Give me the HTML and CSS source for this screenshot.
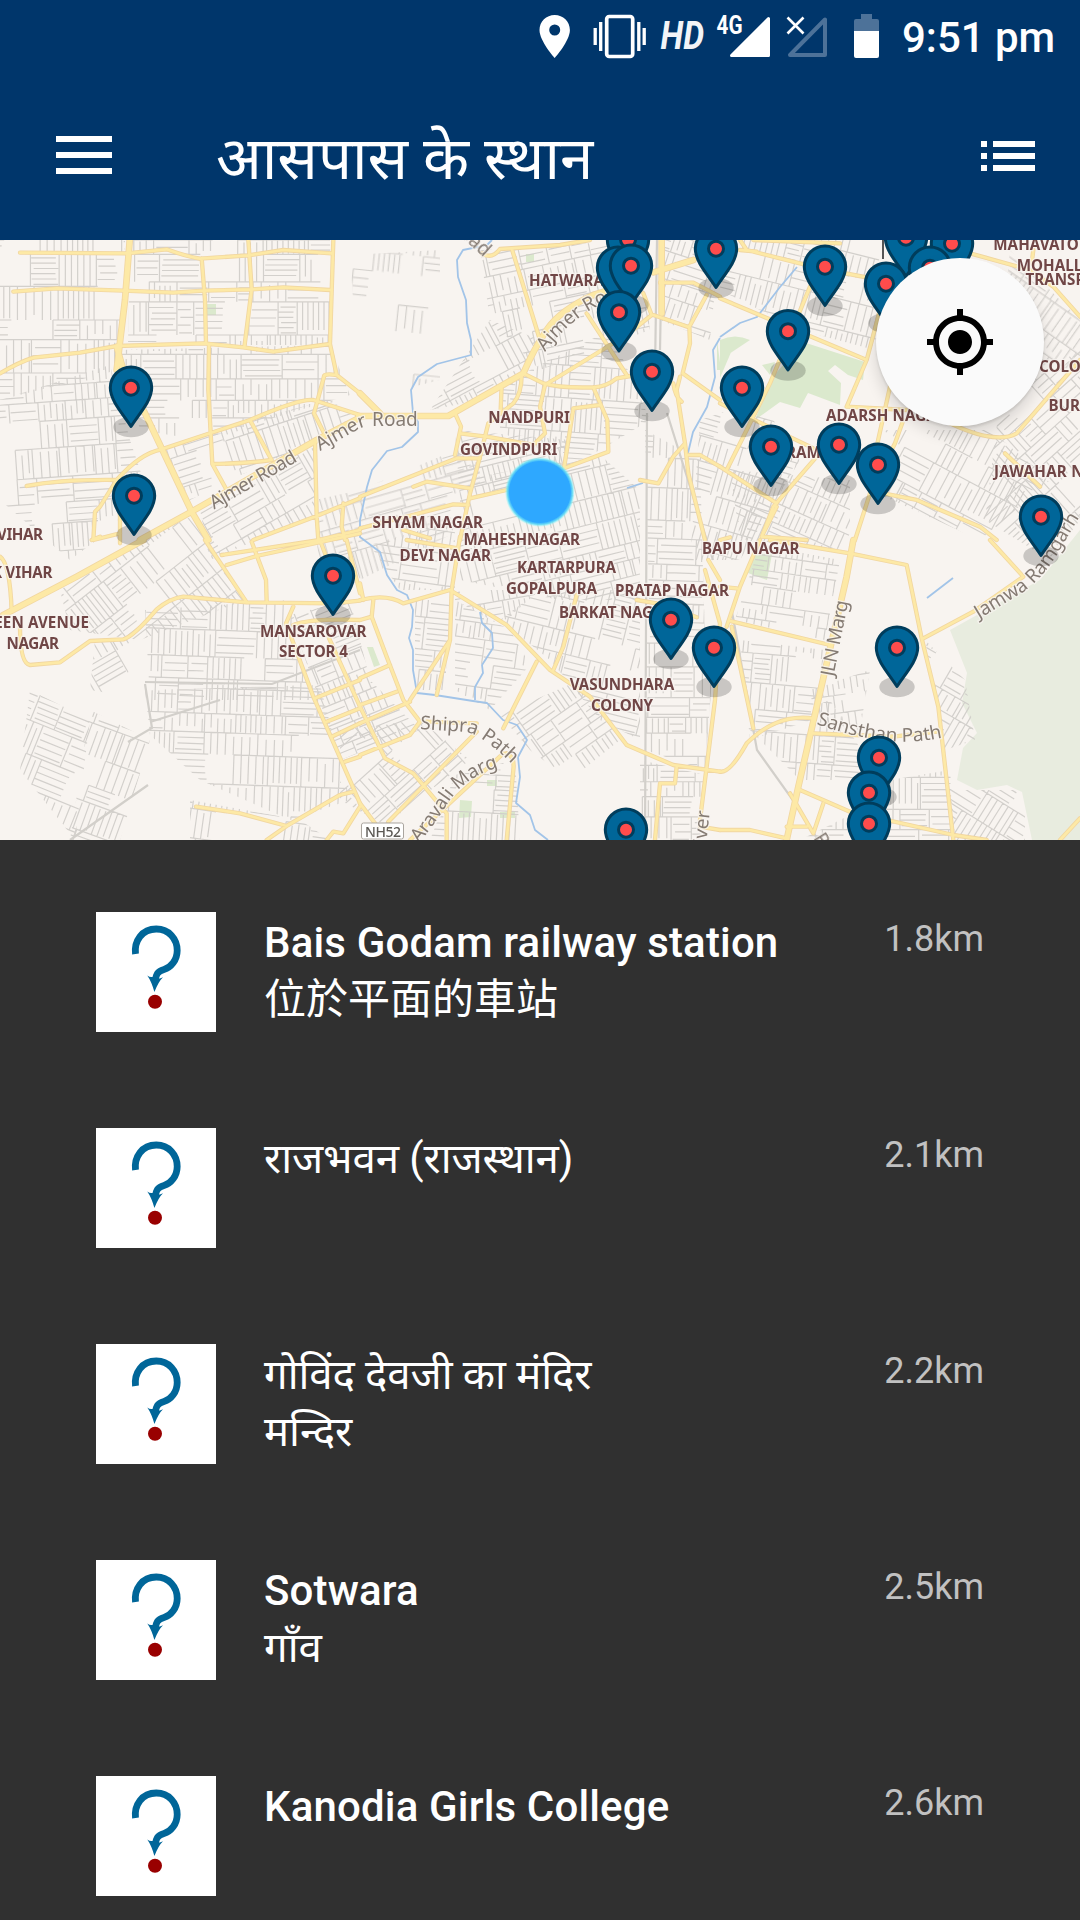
FILE: index.html
```html
<!DOCTYPE html>
<html lang="hi">
<head>
<meta charset="utf-8">
<title>आसपास के स्थान</title>
<link rel="stylesheet" href="styles.css">
</head>
<body>
<header class="top">
  <div class="status">
    <svg class="status-icons" viewBox="530 0 360 72" width="360" height="72">
      <path fill="#fff" fill-rule="evenodd" d="M554.7 15c-8.400 0-15.200 6.500-15.200 15 0 11 15.200 28 15.200 28s15.200-17 15.200-28c0-8.500-6.800-15-15.200-15zm0 9.500a5.500 5.500 0 1 1 0 11 5.500 5.500 0 0 1 0-11z"/>
      <rect x="606.700" y="16.500" width="26" height="40" rx="2.500" fill="none" stroke="#fff" stroke-width="3.700"/>
      <path stroke="#fff" stroke-width="3.300" d="M600.700 22v29M595.200 28v17M638.800 22v29M644.200 28v17"/>
      <text x="660.500" y="48.500" class="st-hd" textLength="43.500" lengthAdjust="spacingAndGlyphs">HD</text>
      <text x="716.500" y="34" class="st-4g" textLength="26" lengthAdjust="spacingAndGlyphs">4G</text>
      <path fill="#fff" stroke="#fff" stroke-width="3" stroke-linejoin="round" d="M768.500 18.500v37H731.500z"/>
      <path fill="none" stroke="#4d7299" stroke-width="4" stroke-linejoin="round" d="M825 19.500V55H790z"/>
      <path stroke="#fff" stroke-width="2.600" d="M787.500 17.500l16 16M803.500 17.500l-16 16"/>
      <path fill="#4d7299" d="M861 14h11v5h5q2 0 2 2v10h-25V21q0-2 2-2h5z"/>
      <path fill="#fff" d="M854 31h25v25q0 2-2 2h-21q-2 0-2-2z"/>
    </svg>
    <span class="clock">9:51 pm</span>
  </div>
  <div class="appbar">
    <svg class="menu" width="56" height="38" viewBox="0 0 56 38"><path fill="#fff" d="M0 0h56v6H0zM0 16h56v6H0zM0 32h56v6H0z"/></svg>
    <h1 class="heading">आसपास के स्थान</h1>
    <svg class="list-toggle" width="54" height="30" viewBox="0 0 54 30"><path fill="#fff" d="M0 0h6v6H0zM12 0h42v6H12zM0 12h6v6H0zM12 12h42v6H12zM0 24h6v6H0zM12 24h42v6H12z"/></svg>
  </div>
</header>

<section class="map">
<svg class="map-canvas" width="1080" height="600" viewBox="0 240 1080 600">
  <defs>
    <g id="pin">
      <path fill="#006699" stroke="#003d5c" stroke-width="3" stroke-linejoin="round" d="M0-1.500C-5-9-12-18-16-25-19-30.500-20.700-35-20.700-40.200a20.700 20.700 0 0 1 41.400 0C20.700-35 19-30.500 16-25 12-18 5-9 0-1.500z"/>
      <circle cy="-40.300" r="7.500" fill="#ff4c4c" stroke="#003d5c" stroke-width="3"/>
    </g>
    <radialGradient id="me"><stop offset=".87" stop-color="#2ea8ff"/><stop offset=".93" stop-color="#5cd8f5" stop-opacity=".9"/><stop offset="1" stop-color="#8ff" stop-opacity="0"/></radialGradient>
    <path id="aj2" d="M320 451L352 433Q361 427 368 426L412 426"/>
    <path id="aj3" d="M545 352Q560 332 580 317T628 295"/>
    <path id="ship" d="M420 729L466 732Q482 735 510 762"/>
    <path id="arav" d="M419 843Q432 828 448 803T496 768"/>
    <path id="sans" d="M816 724Q850 736 880 740T940 738"/>
    <path id="jam" d="M979 619L1025 591Q1045 575 1058 553T1085 508"/>
    <g id="roads">
      <g transform="translate(0 240) scale(.33333)">
        <path d="M60 38L380 40 500 28Q560 50 600 56L745 46 850 30 995 40M40 155L170 145 370 152 520 158 612 152 755 148 850 142 990 150M0 400Q60 365 100 353L240 338 350 318 610 310 730 322 820 335 990 312M605 55L615 180 618 310M627 312L625 450 637 672 680 750M745 0L755 148 733 322M1000 0L990 312 1010 405 1080 460M1010 405Q970 400 972 410L942 520 975 585M350 720Q420 640 485 628L750 540Q900 475 940 480L1080 525M750 540L815 660Q750 670 637 672M80 738Q180 718 350 720L300 800 285 815 280 900 360 880 360 800M945 605L950 830 955 900M760 900L950 828 1080 775M1030 790L1025 860 1035 900M1080 870L955 900"/>
        <path class="major" d="M390-10L375 180 350 390M350 320L370 390 435 520 575 815 625 900M420 900L575 815 950 600 1085 530"/>
      </g>
      <g transform="translate(360 240) scale(.33333)">
        <path d="M365 40Q395 60 420 27L600 15 690 0M455 25L500 170 540 300M555 435L800 285 875 225 850 160M680 220L800 405M490 400L550 430Q600 445 700 442 740 440 770 415L830 405M900 128L1000 128 1080 170M1040 165L988 260 990 310 968 400 1080 480M880 225L988 262M425 435L422 510M485 405Q485 460 460 490L385 550 360 650 330 760 300 900M555 435L540 500 555 580 525 610M285 520L303 560 285 645M300 580L380 590 520 615M720 495L640 505 612 685M700 442L742 540 745 635 612 685 440 750 330 775M0 770L290 655 360 655M160 740L200 725 330 745M325 795L280 793 100 840 0 865M130 870L210 895M960 410L950 450 975 610 985 700 1035 900M840 720L895 730 940 650 975 610M985 645L1020 645 1080 680M940 430Q945 470 965 485"/>
        <path class="major" d="M-5 528L265 528 490 400Q520 330 560 270T700 165L780 140M905 0L905 220M880 97L1000 60M0 460L60 520"/>
      </g>
      <g transform="translate(720 240) scale(.33333)">
        <path d="M0 175L440 360M80 30L240 70 350 95 480 120M80 30L60 0M270 140L150 430 20 690M0 490L270 620 350 665M0 680L170 790M490 760L590 780 780 860 830 900M290 650L160 800 125 890 260 900M60 30L110 35M360 10L100 0M480 210L440 360 380 500 560 510M510 440L470 620M550 540L525 610 450 760 405 900M650 530Q820 620 890 580L1080 360M750 40L930 90 1000 140 1080 230M855 640L960 740M940 30L935 70M0 900L30 892M130 880L170 800"/>
      </g>
      <g transform="translate(0 540) scale(.33333)">
        <path d="M0 50Q30 70 35 215M60 260Q60 370 90 375L180 367 270 303 370 298Q400 290 470 208 510 175 550 170L740 187 1000 190 1080 182M615 0L740 187M665 45L960 0M680 75L770 48 1080-20M755 5L798 120 800 185M960 0L990 80M1040 0L1080 160M880 200L858 250 940 470 1080 790M880 255Q930 235 1080 240M945 475L1080 420M980 545L1080 505M995 590L1080 550M1035 665L1080 650M588 800L720 820 860 858 1020 765 1060 755M860 858L800 900M1080 800L1030 880 1000 875 980 900M985 290L1080 500M275 0L300-10M360 10L360-20"/>
        <path class="major" d="M10 225L230 110 430 0"/>
      </g>
      <g transform="translate(360 540) scale(.33333)">
        <path d="M0 180Q80 160 130 190L270 150 440 255 570 390 690 470 800 615 940 675 1080 695M140 0L295 25M300-10L275 150 270 300 230 465M270 300L150 480M0 130L10 180M40 180L35 230 80 350 130 480 180 545 150 585 0 645M0 240L35 230M0 415L90 375M0 495L110 455M0 550L150 485M0 500L75 655 160 700 260 820 260 900M0 790L45 850M85 845L350 575M430 565L530 365M350 550L200 545M440 640Q465 650 460 690L440 900M150 900L430 640M650 165L610 320 580 390M1045 60L1080 120M1035 90L1080 250 1065 480 1020 840M1020 860L1080 870M950 680L945 730 900 730 885 900M830 180L890 190M980 220L1010 232"/>
      </g>
      <g transform="translate(720 540) scale(.33333)">
        <path d="M150 0L390 40 560 75 605 295 655 500 700 900M120 0L60 140 20 260M30 243L330 315M610 295L760 215 910 110 810 0M0 140L50 145M35 260L100 565M0 695Q30 700 80 610 170 520 280 535M280 580L520 590 650 575M240 750L390 815 700 885 800 900M310 790L280 880 210 760M200 860L260 860M0 870L90 870 200 895M1020 900L1080 835"/>
        <path class="major" d="M400 0L380 110 235 740 200 900"/>
      </g>
    </g>
  </defs>
  <rect y="240" width="1080" height="600" fill="#f8f4f0"/>
  <path fill="#e8ecdf" d="M1080 530L1040 580 950 630 967 673 962 703 977 733 963 748 957 780 977 790 1007 785 1022 792 1032 840H1080z"/>
  <g fill="#dbe9cd">
    <path d="M803 342L865 362 863 380 848 375 835 365 828 371 841 383 840 405 808 393 800 408 780 402 755 420 770 380zM720 340Q735 333 750 340L720 360zM720 345L732 350 720 378zM762 365L775 362 770 375zM753 554L772 554 767 580 748 573zM207 304h9v11h-9zM526 254h8v8h-8zM367 647l6 0 7 18-6 2zM460 800l12 1-1 16-12 1zM487 780h10v6h-10zM500 812h15v6h-15zM717 340l4 30-4 0z"/>
  </g>
  <g id="streets" class="streets"></g>
  <g class="rail"><path d="M657 240L655 370M647 413L645 840M667 413L713 560M662 240L660 350M737 640L757 750 800 810 818 840M732 612L740 655M145 682L272 684 360 650M150 722L220 700M70 840L148 785M145 684L152 728 128 742"/></g>
  <g class="water">
    <path d="M492 240L487 245 463 250 457 260 458 277 466 300 467 323 471 340 471 355 437 364 418 377 411 390 413 413 418 422 418 432 402 447 387 451 372 470 367 487 360 520 360 537 380 552 387 575 397 590 407 595 413 610 412 627 409 638 413 650 413 670 417 693 435 695 473 701 487 703 503 720 517 725 527 740 518 757 520 777 516 803 530 815 535 830 548 840M480 612L482 623 492 633 493 648 482 665 483 673 475 687 475 700M720 338L713 350 715 377 707 407 693 432 688 453M627 488L643 483M797 267L780 287 757 317 740 323 720 337M927 598L953 578"/>
  </g>
  <use href="#roads" class="casing"/>
  <use href="#roads" class="fill"/>
  <g class="rail dark"><path d="M883 240V259"/></g>

  <g class="place">
    <text x="529" y="286" textLength="75">HATWARA</text>
    <text x="488.300" y="422.500" textLength="81.500">NANDPURI</text>
    <text x="460" y="455.300" textLength="97.500">GOVINDPURI</text>
    <text x="372.500" y="528" textLength="110.500">SHYAM NAGAR</text>
    <text x="463.500" y="545" textLength="116.500">MAHESHNAGAR</text>
    <text x="399.500" y="561" textLength="91.500">DEVI NAGAR</text>
    <text x="517" y="573" textLength="99">KARTARPURA</text>
    <text x="506" y="594" textLength="91">GOPALPURA</text>
    <text x="615" y="596" textLength="114">PRATAP NAGAR</text>
    <text x="559" y="618" textLength="114">BARKAT NAGAR</text>
    <text x="702" y="554" textLength="97.500">BAPU NAGAR</text>
    <text x="569.700" y="690" textLength="104.500">VASUNDHARA</text>
    <text x="591" y="710.500" textLength="62">COLONY</text>
    <text x="260" y="636.500" textLength="106.500">MANSAROVAR</text>
    <text x="279" y="657" textLength="69">SECTOR 4</text>
    <text x="-3" y="540" textLength="46">VIHAR</text>
    <text x="-8" y="578" textLength="60.500">K VIHAR</text>
    <text x="-27" y="628" textLength="116">GREEN AVENUE</text>
    <text x="6.500" y="649" textLength="52.500">NAGAR</text>
    <text x="826" y="421" textLength="121">ADARSH NAGAR</text>
    <text x="786" y="457.500">RAM</text>
    <text x="994" y="477" textLength="132">JAWAHAR NAGAR</text>
    <text x="993.300" y="250">MAHAVATON</text>
    <text x="1016.700" y="270.500">MOHALLA</text>
    <text x="1025.500" y="284.500">TRANSPORT</text>
    <text x="1039" y="371.500">COLONY</text>
    <text x="1048.500" y="411">BURMESE</text>
  </g>
  <g class="road-name">
    <text transform="translate(214 509.500) rotate(-30)" textLength="97">Ajmer Road</text>
    <text><textPath href="#aj2">Ajmer Road</textPath></text>
    <text><textPath href="#aj3">Ajmer Road</textPath></text>
    <text transform="translate(450 227) rotate(42)">Road</text>
    <text><textPath href="#ship">Shipra Path</textPath></text>
    <text><textPath href="#arav">Aravali Marg</textPath></text>
    <text transform="translate(833.500 677) rotate(-79)" textLength="77">JLN Marg</text>
    <text><textPath href="#sans">Sansthan Path</textPath></text>
    <text><textPath href="#jam">Jamwa Ramgarh</textPath></text>
    <text transform="translate(705 856) rotate(-84)">River</text>
    <text transform="translate(813 838) rotate(58)">Road</text>
  </g>
  <rect x="361.500" y="823" width="42" height="16" rx="2" fill="#fff" stroke="#aaa59f"/>
  <text x="365" y="836.500" class="shield" textLength="36">NH52</text>

  <circle cx="539.900" cy="492" r="35" fill="url(#me)"/>
  <g id="pins"></g>
</svg>
<button class="locate" aria-label="Locate"><svg width="72" height="72" viewBox="0 0 24 24"><path d="M12 8c-2.210 0-4 1.790-4 4s1.790 4 4 4 4-1.790 4-4-1.790-4-4-4zm8.940 3A8.994 8.994 0 0 0 13 3.060V1h-2v2.060A8.994 8.994 0 0 0 3.060 11H1v2h2.060A8.994 8.994 0 0 0 11 20.940V23h2v-2.060A8.994 8.994 0 0 0 20.940 13H23v-2h-2.060zM12 19c-3.870 0-7-3.130-7-7s3.130-7 7-7 7 3.130 7 7-3.130 7-7 7z"/></svg></button>
</section>

<svg class="sprite" width="0" height="0"><defs><g id="q">
  <path fill="none" stroke="#006699" stroke-width="6.800" d="M39.500 42C38 29 46 17 60.300 17 73 17 81.200 27 81.200 38.500 81.200 48 75 55.500 68 57.500 61 59.500 60 63 59.500 68"/>
  <path fill="#006699" d="M51.300 63.500Q54.500 66 57.500 64.500L62 67Q64.500 66.500 67 65.200Q62.500 69.500 58.400 80Q55.500 69.500 51.300 63.500z"/>
  <circle cx="59" cy="89.700" r="7" fill="#990000"/>
</g></defs></svg>

<main class="places">
  <article class="row"><svg class="thumb" viewBox="0 0 120 120"><use href="#q"/></svg>
    <div class="info"><h2 class="name">Bais Godam railway station</h2><p class="desc" lang="zh-Hant">位於平面的車站</p></div><span class="dist">1.8km</span></article>
  <article class="row"><svg class="thumb" viewBox="0 0 120 120"><use href="#q"/></svg>
    <div class="info"><h2 class="name deva">राजभवन (राजस्थान)</h2></div><span class="dist">2.1km</span></article>
  <article class="row"><svg class="thumb" viewBox="0 0 120 120"><use href="#q"/></svg>
    <div class="info"><h2 class="name deva">गोविंद देवजी का मंदिर</h2><p class="desc deva">मन्दिर</p></div><span class="dist">2.2km</span></article>
  <article class="row"><svg class="thumb" viewBox="0 0 120 120"><use href="#q"/></svg>
    <div class="info"><h2 class="name">Sotwara</h2><p class="desc deva">गाँव</p></div><span class="dist">2.5km</span></article>
  <article class="row"><svg class="thumb" viewBox="0 0 120 120"><use href="#q"/></svg>
    <div class="info"><h2 class="name">Kanodia Girls College</h2></div><span class="dist">2.6km</span></article>
</main>
<script src="map.js"></script>
</body>
</html>
```
FILE: styles.css
```css
* { box-sizing: border-box; margin: 0; padding: 0; }
body {
  width: 1080px;
  height: 1920px;
  overflow: hidden;
  background: #303030;
  color: #fff;
  font-family: Roboto, "Noto Sans", "Noto Sans Devanagari", "Noto Sans CJK TC", sans-serif;
}
.top { height: 240px; background: #00366b; }
.status { display: flex; height: 72px; padding: 0 25px 0 530px; justify-content: space-between; }
.clock { font-size: 42px; font-weight: 500; line-height: 75px; letter-spacing: -.05px; white-space: nowrap; }
.st-hd { font: italic 700 38px Roboto, sans-serif; fill: #fff; opacity: .95; }
.st-4g { font: 700 25px Roboto, sans-serif; fill: #fff; }
.appbar { display: flex; align-items: center; height: 168px; padding: 0 45px 0 56px; }
.menu { margin-bottom: 2px; }
.heading { margin: 6px 0 0 104px; font-size: 60px; font-weight: 400; line-height: 80px; white-space: nowrap; }
.list-toggle { margin-left: auto; }

.map { position: relative; height: 600px; overflow: hidden; }
.map-canvas { display: block; }
.streets { fill: none; stroke: #cfccc8; stroke-width: 1.2; opacity: .9; }
.rail { fill: none; stroke: #d2cfca; stroke-width: 2.2; }
.rail.dark { stroke: #555; stroke-width: 2; }
.water { fill: none; stroke: #a2c4e8; stroke-width: 1.8; stroke-linejoin: round; }
.casing, .fill { fill: none; stroke-linejoin: round; stroke-linecap: round; }
.casing { stroke: #f1d6a0; stroke-width: 13px; --major: 20px; }
.fill { stroke: #fde9a6; stroke-width: 8px; --major: 15px; }
.major { stroke-width: var(--major); }
.place text { font: 700 15.2px "Noto Sans", "Open Sans", sans-serif; fill: #704646; stroke: #f8f4f0; stroke-width: 2.5px; stroke-opacity: .8; paint-order: stroke; }
.road-name text { font: 400 19px "Noto Sans", "Open Sans", sans-serif; fill: #857b73; stroke: #f8f4f0; stroke-width: 2.5px; stroke-opacity: .8; paint-order: stroke; }
.shield { font: 500 14px "Noto Sans", sans-serif; fill: #5c5955; }
.locate {
  position: absolute;
  top: 18px;
  right: 36px;
  display: grid;
  place-items: center;
  width: 168px;
  height: 168px;
  border: 0;
  border-radius: 50%;
  background: #fafafa;
  box-shadow: 0 2px 3px rgba(0,0,0,.12), 0 8px 16px rgba(0,0,0,.14);
}
.sprite { display: block; width: 0; height: 0; }
.places { padding: 72px 96px 0; }
.row { display: flex; height: 216px; }
.thumb { flex: none; width: 120px; height: 120px; background: #fff; }
.info { flex: 1; padding: 2px 0 0 48px; }
.name, .desc { height: 57px; font-size: 42px; font-weight: 500; line-height: 57px; white-space: nowrap; }
.name { letter-spacing: .15px; }
.desc { font-weight: 400; }
.deva { font-weight: 400; letter-spacing: -.1px; }
.dist { padding-top: 6px; font-size: 36px; line-height: 42px; color: #c1c1c1; }
```
FILE: map.js
```js
const NS = "http://www.w3.org/2000/svg";
const add = (parent, tag, attrs) => {
  const el = document.createElementNS(NS, tag);
  for (const k in attrs) el.setAttribute(k, attrs[k]);
  parent.appendChild(el);
  return el;
};

// Tip position of every marker, back to front.
const tips = [[628,280],[618,308],[631,306],[716,289],[825,307],[906,278],[952,284],[886,324],[930,308],
  [619,352.5],[788,371.5],[652,412],[131,428],[742,428],[839,485],[771,487],[878,505],[134,536],[1041,557],
  [333,616],[671,660],[714,688],[897,688],[879,798],[869,833],[869,864],[626,870]];
const pins = document.getElementById("pins");
for (const [x, y] of tips) add(pins, "ellipse", { cx: x, cy: y - 1, rx: 17.7, ry: 10.3, fill: "#000", "fill-opacity": 0.19 });
for (const [x, y] of tips) add(pins, "use", { href: "#pin", x, y });

// Residential districts: outline, street direction in degrees.
const districts = [
  ["0,240 125,240 118,370 0,400", 0], ["130,240 330,240 332,345 128,345", 0],
  ["0,400 110,365 130,440 150,500 70,560 0,500", -4], ["120,350 330,345 350,395 200,440 140,430", 0],
  ["165,450 250,420 330,400 360,420 230,480 190,500", -18], ["200,510 315,445 315,515 210,560", -30],
  ["315,500 360,490 420,465 480,440 480,520 320,600", -16], ["60,590 130,545 195,515 245,600 140,640 70,630", -38],
  ["95,640 140,640 120,695 90,690", 60], ["145,610 290,600 310,700 150,700", 2],
  ["145,690 320,685 350,800 290,820 200,780 150,735", 2], ["30,690 90,720 75,840 20,770", 22],
  ["190,800 300,820 330,840 190,840", 8], ["290,615 350,600 370,680 420,730 340,760", -22],
  ["340,730 420,720 470,760 385,825 340,800", -42], ["455,775 515,760 520,840 430,840", 3],
  ["480,250 640,240 650,330 540,370 490,320", -12], ["490,320 540,340 520,380 480,400 430,410", -28],
  ["500,385 610,330 650,420 600,450 560,470 500,430", 4], ["455,430 570,440 560,480 460,500", -14],
  ["460,480 600,455 640,490 640,600 560,600 460,580", -14], ["370,545 455,520 455,590 400,590", 8],
  ["415,600 450,600 445,690 415,690", 6], ["455,600 510,630 530,665 490,710 455,690", 8],
  ["540,590 640,590 640,740 600,720 550,660 500,620", 14], ["500,715 580,680 620,740 570,780 530,750", -35],
  ["645,430 700,460 705,640 650,640", 2], ["645,640 715,640 705,770 645,750", 0],
  ["640,760 705,775 700,840 640,840", 0], ["660,240 720,240 710,340 660,320", 18],
  ["720,240 880,240 875,350 800,330 720,290", 14], ["700,420 760,400 800,460 740,560 690,560", 16],
  ["730,470 850,480 850,550 740,540", 24], ["760,545 840,560 825,640 735,620", 8],
  ["740,640 825,650 812,720 750,740", 5], ["880,430 990,430 1050,480 980,540 870,490", 28],
  ["1000,400 1080,350 1080,520 1050,560 985,520", -42], ["1010,250 1080,320 1080,370 1000,360", 35],
  ["925,640 965,680 975,740 945,750", 30], ["810,690 870,670 860,730 815,720", -8],
  ["750,730 830,700 880,780 800,780", 4], ["890,780 950,770 955,840 800,840 880,800", 0],
  ["950,790 1025,790 1025,840 955,840", 32], ["455,590 540,590 500,625 455,600", -10],
  ["90,710 150,740 120,840 70,840", 20], ["350,255 440,250 440,380 360,400", 6]
];

let seed = 41;
const rnd = () => ((seed = (seed * 16807) % 2147483647) / 2147483647);
const streets = document.getElementById("streets");
const defs = add(streets, "defs", {});
districts.forEach(([points, angle], i) => {
  const clip = add(defs, "clipPath", { id: "d" + i });
  add(clip, "polygon", { points });
  const pts = points.split(" ").map(p => p.split(",").map(Number));
  const cx = pts.reduce((s, p) => s + p[0], 0) / pts.length;
  const cy = pts.reduce((s, p) => s + p[1], 0) / pts.length;
  const reach = Math.max(...pts.map(p => Math.hypot(p[0] - cx, p[1] - cy)));
  const sparse = i === districts.length - 1 ? 0.25 : 0.88;
  let d = "";
  for (let y = -reach; y < reach;) {
    const h = 14 + rnd() * 20;
    for (let x = -reach; x < reach;) {
      const w = 16 + rnd() * 26;
      if (rnd() < sparse) {
        const step = 5 + rnd() * 3.5;
        d += `M${x.toFixed(1)} ${y.toFixed(1)}h${w.toFixed(1)}M${x.toFixed(1)} ${y.toFixed(1)}v${h.toFixed(1)}`;
        if (rnd() < 0.55) {
          const cut = rnd() * 6;
          for (let k = step; k < w - 2; k += step) d += `M${(x + k).toFixed(1)} ${(y + (rnd() < 0.5 ? cut : 0)).toFixed(1)}v${(h - cut).toFixed(1)}`;
        } else {
          for (let k = step; k < h - 2; k += step) d += `M${(x + rnd() * 4).toFixed(1)} ${(y + k).toFixed(1)}h${(w - 4).toFixed(1)}`;
        }
      }
      x += w;
    }
    y += h;
  }
  const g = add(streets, "g", { "clip-path": `url(#d${i})` });
  add(g, "path", { d, transform: `translate(${cx} ${cy}) rotate(${angle})` });
});
```
